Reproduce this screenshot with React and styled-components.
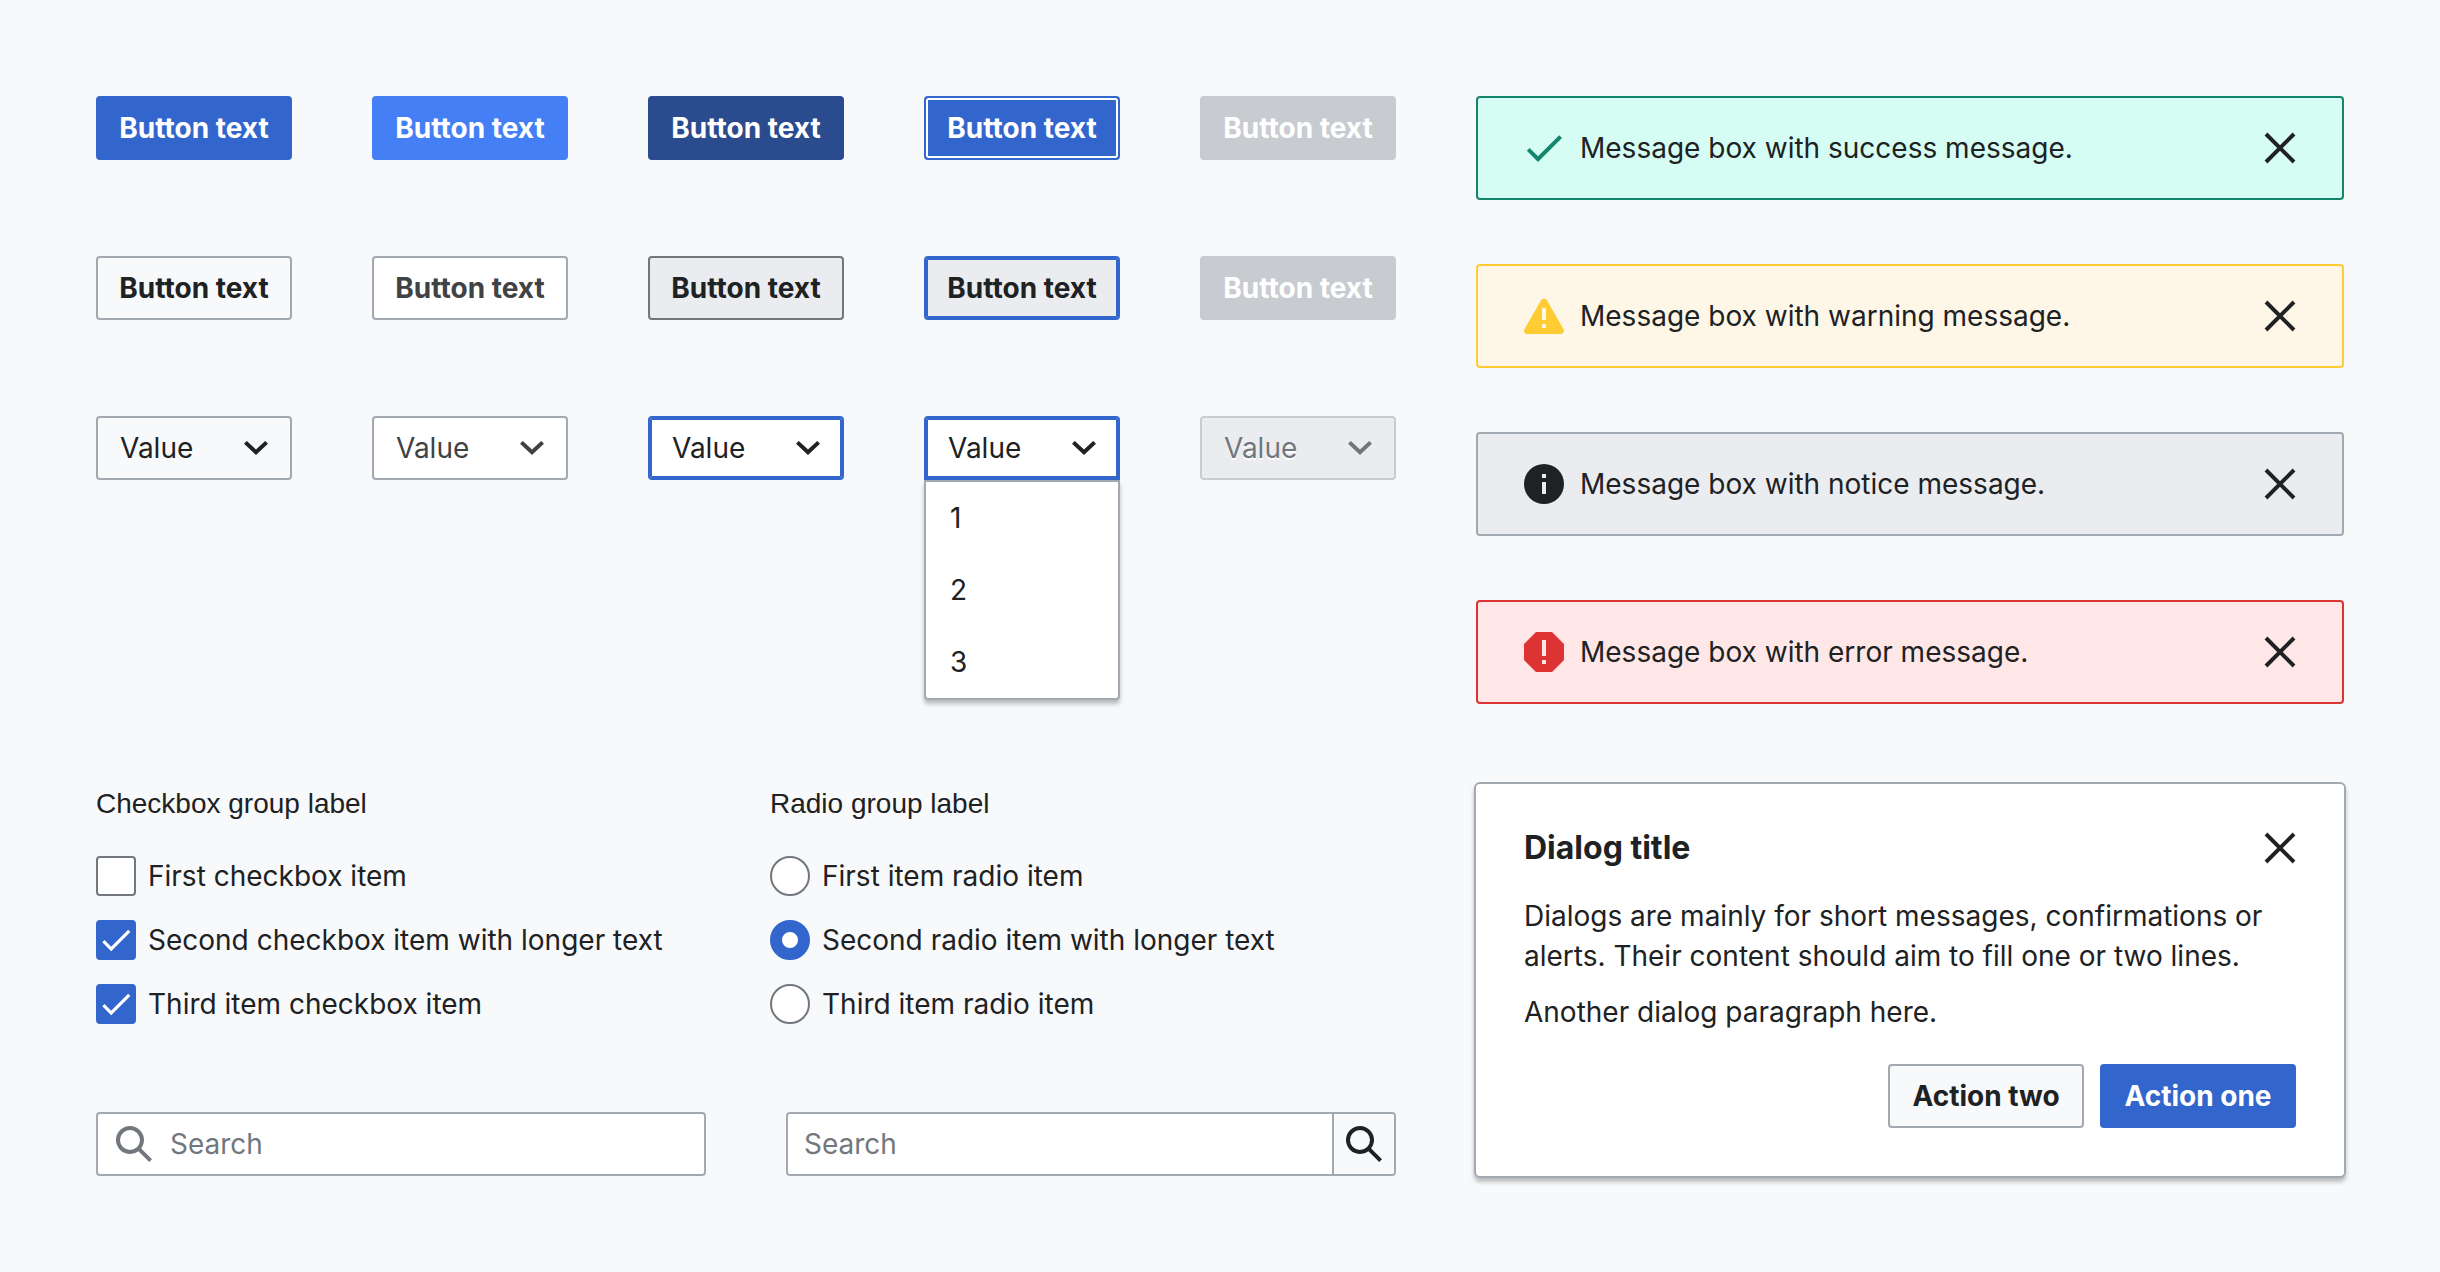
import React from 'react';
import styled, { createGlobalStyle, css } from 'styled-components';

const color = {
  page: '#f8f9fb',
  white: '#ffffff',
  text: '#202122',
  textHover: '#404244',
  subtle: '#72777d',
  border: '#a2a9b1',
  disabled: '#c8ccd1',
  muted: '#eaecf0',
  blue: '#3366cc',
  blueHover: '#447ff5',
  blueActive: '#2a4b8d',
};

const GlobalStyle = createGlobalStyle`
  *, *::before, *::after { box-sizing: border-box; }
  body {
    margin: 0;
    background: ${color.page};
    color: ${color.text};
    font-family: Inter, "Liberation Sans", sans-serif;
    font-size: 28px;
    line-height: 40px;
  }
  button, input, select { font: inherit; color: inherit; margin: 0; }
`;

const Page = styled.main`
  display: grid;
  grid-template-columns: minmax(0, 1300fr) minmax(0, 868fr);
  gap: 80px;
  padding: 96px;
`;

const StateGrid = styled.section`
  display: grid;
  grid-template-columns: repeat(5, minmax(0, 1fr));
  gap: 96px 80px;
  align-content: start;
`;

const buttonStates = {
  primary: css`background: ${color.blue}; border-color: ${color.blue}; color: ${color.white};`,
  primaryHover: css`background: ${color.blueHover}; border-color: ${color.blueHover}; color: ${color.white};`,
  primaryActive: css`background: ${color.blueActive}; border-color: ${color.blueActive}; color: ${color.white};`,
  primaryFocus: css`
    background: ${color.blue};
    border-color: ${color.blue};
    color: ${color.white};
    box-shadow: inset 0 0 0 2px ${color.white};
  `,
  normal: css`background: ${color.page}; border-color: ${color.border};`,
  normalHover: css`background: ${color.white}; border-color: ${color.border}; color: ${color.textHover};`,
  normalActive: css`background: ${color.muted}; border-color: ${color.subtle};`,
  normalFocus: css`
    background: ${color.muted};
    border-color: ${color.blue};
    box-shadow: inset 0 0 0 2px ${color.blue};
  `,
  disabled: css`background: ${color.disabled}; border-color: ${color.disabled}; color: ${color.white};`,
};

const Button = styled.button`
  height: 64px;
  min-width: 196px;
  padding: 0 16px;
  border: 2px solid;
  border-radius: 4px;
  color: ${color.text};
  font-weight: 700;
  white-space: nowrap;
  ${({ $state }) => buttonStates[$state]}
`;

const SelectWrap = styled.div`
  position: relative;
  color: ${({ $state }) =>
    ({ hover: color.textHover, disabled: color.subtle })[$state] || color.text};
`;

const selectStates = {
  normal: css`background: ${color.page};`,
  hover: css`background: ${color.white};`,
  focus: css`
    background: ${color.white};
    border-color: ${color.blue};
    box-shadow: inset 0 0 0 2px ${color.blue};
  `,
  open: css`
    background: ${color.white};
    border-color: ${color.blue};
    border-radius: 4px 4px 0 0;
    box-shadow: inset 0 0 0 2px ${color.blue};
  `,
  disabled: css`
    background: ${color.muted};
    border-color: ${color.disabled};
    text-shadow: 0 2px 0 ${color.white};
    opacity: 1;
  `,
};

const SelectBox = styled.select`
  display: block;
  appearance: none;
  width: 100%;
  height: 64px;
  padding: 0 56px 0 22px;
  border: 2px solid ${color.border};
  border-radius: 4px;
  ${({ $state }) => selectStates[$state]}
`;

const Chevron = styled.svg`
  position: absolute;
  top: 25px;
  right: 24px;
  width: 24px;
  height: 14px;
  pointer-events: none;
`;

const Menu = styled.ul`
  position: absolute;
  top: 100%;
  left: 0;
  right: 0;
  margin: 0;
  padding: 0;
  list-style: none;
  background: ${color.white};
  border: 2px solid ${color.border};
  border-radius: 0 0 4px 4px;
  box-shadow: 0 4px 4px rgba(0, 0, 0, 0.25);
`;

const MenuItem = styled.li`
  padding: 16px 24px;
`;

const Messages = styled.section`
  display: flex;
  flex-direction: column;
  gap: 64px;
`;

const messageKinds = {
  success: css`background: #d5fdf4; border-color: #14866d;`,
  warning: css`background: #fef6e7; border-color: #ffcc33;`,
  notice: css`background: ${color.muted}; border-color: ${color.border};`,
  error: css`background: #fee7e6; border-color: #dd3333;`,
};

const MessageBox = styled.div`
  display: flex;
  align-items: center;
  gap: 16px;
  padding: 30px 46px;
  border: 2px solid;
  border-radius: 4px;
  ${({ $kind }) => messageKinds[$kind]}
`;

const MessageText = styled.p`
  flex: 1;
  margin: 0;
`;

const Icon = styled.svg`
  display: block;
  flex: none;
  width: ${({ $size }) => $size || 40}px;
  height: ${({ $size }) => $size || 40}px;
`;

const CloseButton = styled.button`
  flex: none;
  padding: 0;
  border: 0;
  background: none;
`;

const Forms = styled.section`
  display: flex;
  flex-direction: column;
  justify-content: space-between;
`;

const Groups = styled.div`
  display: grid;
  grid-template-columns: 594fr 626fr;
  gap: 80px;
`;

const Group = styled.fieldset`
  min-width: 0;
  margin: 0;
  padding: 0;
  border: 0;
`;

const GroupLabel = styled.legend`
  padding: 0;
  margin-bottom: 32px;
  font-family: "Liberation Sans", Arial, sans-serif;
`;

const Options = styled.div`
  display: flex;
  flex-direction: column;
  gap: 24px;
`;

const Option = styled.label`
  display: flex;
  gap: 12px;
`;

const Tick = styled.span`
  display: grid;
  place-items: center;
  flex: none;
  color: ${color.white};

  > * { grid-area: 1 / 1; }
  > svg { pointer-events: none; visibility: hidden; }
  > input:checked + svg { visibility: visible; }
`;

const CheckInput = styled.input`
  appearance: none;
  width: 40px;
  height: 40px;
  background: ${color.white};
  border: 2px solid ${color.subtle};
  border-radius: 4px;

  &:checked {
    background: ${color.blue};
    border-color: ${color.blue};
  }
`;

const RadioInput = styled.input`
  appearance: none;
  flex: none;
  width: 40px;
  height: 40px;
  background: ${color.white};
  border: 2px solid ${color.subtle};
  border-radius: 50%;

  &:checked { border: 12px solid ${color.blue}; }
`;

const Searches = styled.div`
  display: grid;
  grid-template-columns: 1fr 1fr;
  gap: 80px;
`;

const SearchField = styled.div`
  display: flex;
  align-items: center;
  gap: 16px;
  height: 64px;
  padding-left: 16px;
  background: ${color.white};
  border: 2px solid ${color.border};
  border-radius: 4px;
  color: ${color.subtle};
  overflow: hidden;
`;

const SearchInput = styled.input`
  flex: 1;
  min-width: 0;
  height: 40px;
  padding: 0;
  border: 0;
  background: none;
  outline: none;

  &::placeholder { color: ${color.subtle}; opacity: 1; }
`;

const SearchButton = styled.button`
  display: grid;
  place-items: center;
  align-self: stretch;
  width: 62px;
  padding: 0;
  border: 0;
  border-left: 2px solid ${color.border};
  background: ${color.page};
  color: ${color.text};
`;

const Dialog = styled.section`
  padding: 48px;
  background: ${color.white};
  border-radius: 4px;
  box-shadow: 0 0 0 2px ${color.border}, 0 4px 4px 2px rgba(0, 0, 0, 0.25);
`;

const DialogHeader = styled.header`
  display: flex;
  justify-content: space-between;
  align-items: center;
  margin-bottom: 32px;
`;

const DialogTitle = styled.h2`
  margin: 0;
  font-size: 32px;
  line-height: 32px;
  font-weight: 700;
`;

const DialogText = styled.p`
  margin: 0 0 16px;
`;

const DialogActions = styled.footer`
  display: flex;
  justify-content: flex-end;
  gap: 16px;
  margin-top: 32px;
`;

const CheckIcon = ({ size, fill = 'currentColor' }) => (
  <Icon viewBox="0 0 20 20" $size={size} aria-hidden="true">
    <path fill={fill} d="M7 14.17 2.83 10l-1.41 1.41L7 17 19 5l-1.41-1.42z" />
  </Icon>
);

const kindIcons = {
  success: <CheckIcon fill="#14866d" />,
  warning: (
    <Icon viewBox="0 0 20 20" aria-hidden="true">
      <path
        fill="#ffcc33"
        fillRule="evenodd"
        d="M11.53 2.3A1.85 1.85 0 0 0 10 1.21 1.85 1.85 0 0 0 8.48 2.3L.36 16.36C-.48 17.81.21 19 1.88 19h16.24c1.67 0 2.36-1.19 1.52-2.64zM9 6h2v6H9zm0 8h2v2H9z"
      />
    </Icon>
  ),
  notice: (
    <Icon viewBox="0 0 20 20" aria-hidden="true">
      <path
        fill={color.text}
        fillRule="evenodd"
        d="M10 0a10 10 0 1 0 0 20 10 10 0 0 0 0-20zM9 5h2v2H9zm0 4h2v6H9z"
      />
    </Icon>
  ),
  error: (
    <Icon viewBox="0 0 20 20" aria-hidden="true">
      <path
        fill="#dd3333"
        fillRule="evenodd"
        d="M6 0 0 6v8l6 6h8l6-6V6l-6-6zM9 4h2v8H9zm0 10h2v2H9z"
      />
    </Icon>
  ),
};

const SearchIcon = () => (
  <Icon viewBox="0 0 20 20" aria-hidden="true">
    <path
      fill="currentColor"
      fillRule="evenodd"
      d="M12.2 13.6a7 7 0 1 1 1.4-1.4l5.4 5.4-1.4 1.4zM3 8a5 5 0 1 0 10 0A5 5 0 0 0 3 8"
    />
  </Icon>
);

const Close = () => (
  <CloseButton type="button" aria-label="Close">
    <Icon viewBox="0 0 32 32" $size={32} aria-hidden="true">
      <path d="M2 2l28 28M30 2L2 30" stroke={color.text} strokeWidth="4" fill="none" />
    </Icon>
  </CloseButton>
);

const Select = ({ state, children }) => (
  <SelectWrap $state={state}>
    <SelectBox $state={state} disabled={state === 'disabled'} aria-label="Value">
      <option>Value</option>
    </SelectBox>
    <Chevron viewBox="0 0 24 14" aria-hidden="true">
      <path fill="none" stroke="currentColor" strokeWidth="4" d="M1.4 1.4 12 11.2 22.6 1.4" />
    </Chevron>
    {children}
  </SelectWrap>
);

const buttonList = [
  'primary', 'primaryHover', 'primaryActive', 'primaryFocus', 'disabled',
  'normal', 'normalHover', 'normalActive', 'normalFocus', 'disabled',
];
const selectList = ['normal', 'hover', 'focus', 'open', 'disabled'];
const messageList = ['success', 'warning', 'notice', 'error'];
const checkList = [
  { label: 'First checkbox item', checked: false },
  { label: 'Second checkbox item with longer text', checked: true },
  { label: 'Third item checkbox item', checked: true },
];
const radioList = [
  { label: 'First item radio item', checked: false },
  { label: 'Second radio item with longer text', checked: true },
  { label: 'Third item radio item', checked: false },
];

export default function App() {
  return (
    <>
      <GlobalStyle />
      <Page>
        <StateGrid>
          {buttonList.map((state, i) => (
            <Button key={i} type="button" $state={state} disabled={state === 'disabled'}>
              Button text
            </Button>
          ))}
          {selectList.map((state) => (
            <Select key={state} state={state}>
              {state === 'open' && (
                <Menu role="listbox" aria-label="Value">
                  {[1, 2, 3].map((n) => (
                    <MenuItem key={n} role="option">{n}</MenuItem>
                  ))}
                </Menu>
              )}
            </Select>
          ))}
        </StateGrid>

        <Messages>
          {messageList.map((kind) => (
            <MessageBox key={kind} $kind={kind}>
              {kindIcons[kind]}
              <MessageText>{`Message box with ${kind} message.`}</MessageText>
              <Close />
            </MessageBox>
          ))}
        </Messages>

        <Forms>
          <Groups>
            <Group>
              <GroupLabel>Checkbox group label</GroupLabel>
              <Options>
                {checkList.map(({ label, checked }) => (
                  <Option key={label}>
                    <Tick>
                      <CheckInput type="checkbox" defaultChecked={checked} />
                      <CheckIcon size={32} />
                    </Tick>
                    {label}
                  </Option>
                ))}
              </Options>
            </Group>
            <Group>
              <GroupLabel>Radio group label</GroupLabel>
              <Options>
                {radioList.map(({ label, checked }) => (
                  <Option key={label}>
                    <RadioInput type="radio" name="radio-group" defaultChecked={checked} />
                    {label}
                  </Option>
                ))}
              </Options>
            </Group>
          </Groups>
          <Searches>
            <SearchField>
              <SearchIcon />
              <SearchInput type="search" placeholder="Search" aria-label="Search" />
            </SearchField>
            <SearchField>
              <SearchInput type="search" placeholder="Search" aria-label="Search" />
              <SearchButton type="button" aria-label="Submit search">
                <SearchIcon />
              </SearchButton>
            </SearchField>
          </Searches>
        </Forms>

        <Dialog role="dialog" aria-labelledby="dialog-title">
          <DialogHeader>
            <DialogTitle id="dialog-title">Dialog title</DialogTitle>
            <Close />
          </DialogHeader>
          <DialogText>
            Dialogs are mainly for short messages, confirmations or alerts. Their content should
            aim to fill one or two lines.
          </DialogText>
          <DialogText>Another dialog paragraph here.</DialogText>
          <DialogActions>
            <Button type="button" $state="normal">Action two</Button>
            <Button type="button" $state="primary">Action one</Button>
          </DialogActions>
        </Dialog>
      </Page>
    </>
  );
}
